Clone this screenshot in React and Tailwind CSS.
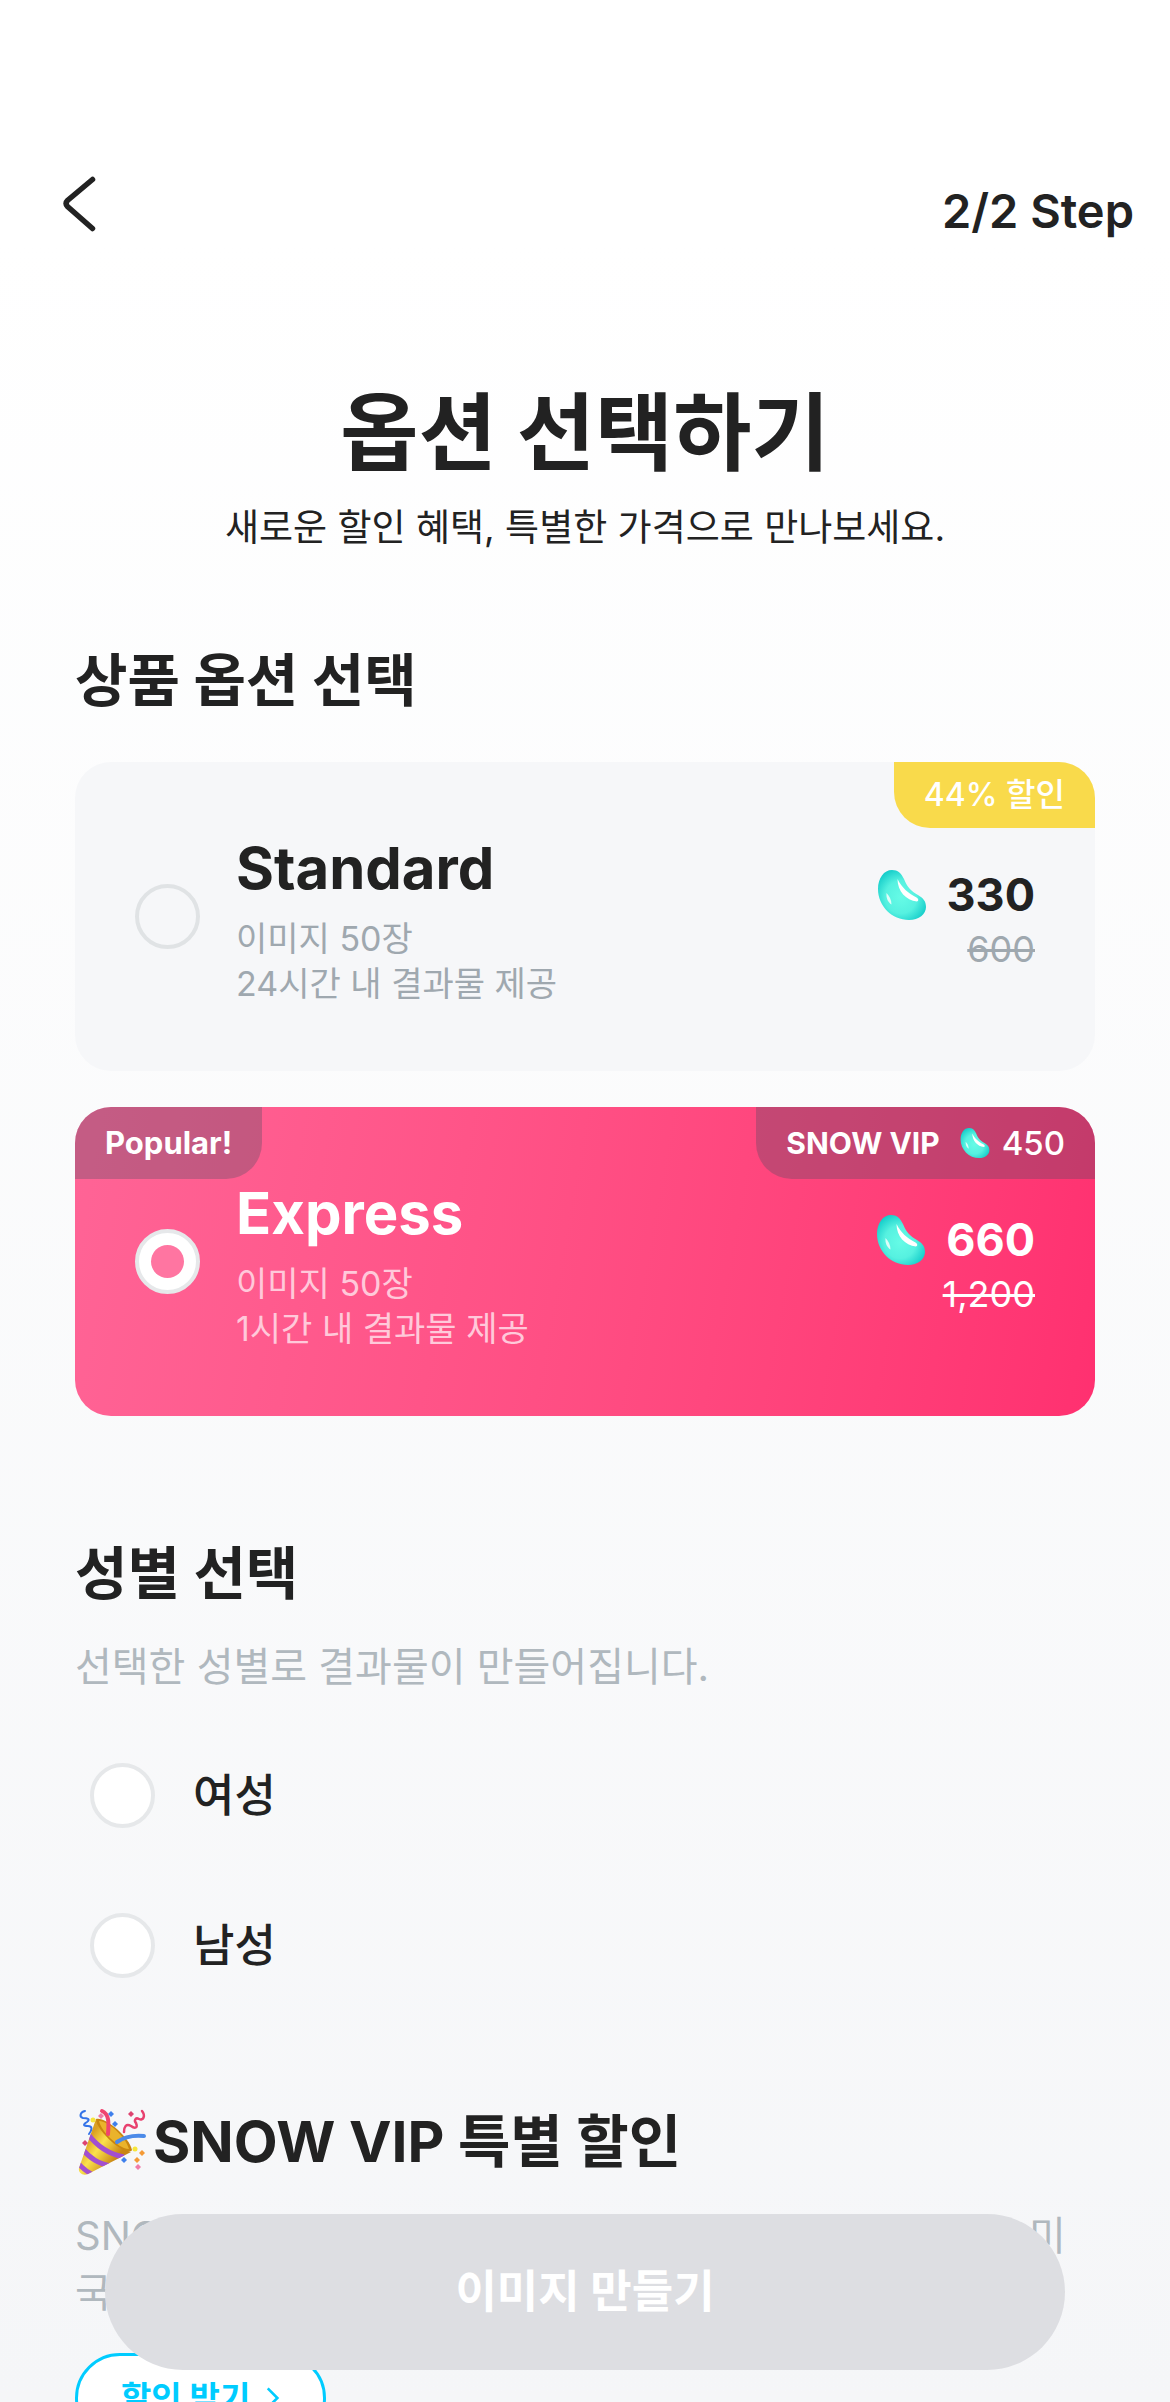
import { useState } from "react";

const productOptions = [
  {
    id: "standard",
    name: "Standard",
    details: ["이미지 50장", "24시간 내 결과물 제공"],
    price: "330",
    originalPrice: "600",
    discount: "44% 할인",
  },
  {
    id: "express",
    name: "Express",
    details: ["이미지 50장", "1시간 내 결과물 제공"],
    price: "660",
    originalPrice: "1,200",
    popular: true,
    vipPrice: "450",
  },
];

const genders = [
  { id: "female", label: "여성" },
  { id: "male", label: "남성" },
];

function BeanIcon({ id, className }) {
  return (
    <svg viewBox="0 0 50 52" className={className} aria-hidden="true">
      <defs>
        <radialGradient id={id} cx="0.48" cy="0.54" r="0.6">
          <stop offset="0" stopColor="#66fbe6" />
          <stop offset="0.55" stopColor="#56f1e0" />
          <stop offset="1" stopColor="#12cbc9" />
        </radialGradient>
        <filter id={`${id}-soft`} x="-20%" y="-20%" width="140%" height="140%">
          <feGaussianBlur stdDeviation="0.6" />
        </filter>
      </defs>
      <path
        d="M15 1C7 1 1 9 1 20C1 37 15 51 32 51C42 51 49 45 49 38C49 32 46 29 41 26C34 22 30 18 27 10C24 4 21 1 15 1Z"
        fill={`url(#${id})`}
      />
      <g fill="#fff" filter={`url(#${id}-soft)`}>
        <path d="M20.500 10C20.500 22 29 31.500 40 32.500C42 31.500 41.500 30 39.500 28.500C31 24 25 19 20.500 10Z" />
        <path d="M9.500 24C9 29 11 33.500 14.500 35.500C14.500 31 12.500 27 9.500 24Z" opacity="0.8" />
      </g>
    </svg>
  );
}

function PartyIcon({ className }) {
  return (
    <svg viewBox="5 3 78 78" className={className} aria-hidden="true">
      <defs>
        <linearGradient id="cone" x1="0.15" y1="0.4" x2="0.65" y2="0.8">
          <stop offset="0" stopColor="#dba022" />
          <stop offset="0.4" stopColor="#fbe24c" />
          <stop offset="1" stopColor="#c98512" />
        </linearGradient>
        <clipPath id="coneClip">
          <path d="M26 19L9 68C8 73 13 76 18 74L61 52C50 48 34 34 26 19Z" />
        </clipPath>
      </defs>
      <path d="M26 19L9 68C8 73 13 76 18 74L61 52C50 48 34 34 26 19Z" fill="url(#cone)" />
      <g clipPath="url(#coneClip)" fill="none" stroke="#a24fd0" strokeWidth="5">
        <path d="M18 34C26 45 38 54 54 57" />
        <path d="M12 49C20 58 28 64 42 66" />
        <path d="M7 62C12 68 18 73 26 76" />
      </g>
      <path d="M26 19C34 16 59 36 62 50C60 54 50 49 42 42C34 35 26 25 26 19Z" fill="#c9860f" />
      <path d="M29 21C36 20 56 36 59 49C52 49 46 43 40 38C35 33 30 26 29 21Z" fill="#eab32b" />

      {/* Streamers */}
      <g fill="none" strokeLinecap="round">
        <path d="M32 11C39 14 39 22 38 34" stroke="#f0436f" strokeWidth="4" />
        <path d="M47 42C54 37 63 35 74 36" stroke="#4b8ae8" strokeWidth="4" />
        <path d="M15 11C10 12 9 17 13 18C17 18 21 19 17 22C12 25 14 26 18 26C23 26 22 30 19 34" stroke="#3473e8" strokeWidth="2" />
        <path d="M72 11C76 16 73 21 69 19C65 17 64 21 66 23C68 28 65 29 61 26C56 23 54 27 54 32" stroke="#e8416f" strokeWidth="2.500" />
      </g>

      {/* Confetti */}
      <circle cx="23" cy="20" r="2.500" fill="#f6e63c" />
      <circle cx="65" cy="49" r="2.500" fill="#f6e63c" />
      <g fill="#3f80ec">
        <path d="M41 11L44 14L41 17L38 14Z" />
        <path d="M45 21L48 24L45 27L42 24Z" />
        <path d="M54 57L57 60L54 63L51 60Z" />
      </g>
      <g fill="#dd4470">
        <path d="M61 11L64 14L61 17L58 14Z" />
        <path d="M15 40L18 43L15 46L12 43Z" />
      </g>
      <g fill="#f07ba8">
        <path d="M31 13L34 16L31 19L28 16Z" />
        <path d="M68 64L71 67L68 70L65 67Z" />
      </g>
      <g fill="#f49a36">
        <path d="M72 50L75 53L72 56L69 53Z" />
        <path d="M67 57L70 60L67 63L64 60Z" />
      </g>
    </svg>
  );
}

function Radio({ className, ...props }) {
  return (
    <input
      type="radio"
      className={`grid size-[65px] shrink-0 appearance-none place-content-center rounded-full border-4 before:size-[33px] before:rounded-full checked:bg-white checked:before:bg-[#ff75a1] checked:before:content-[''] ${className}`}
      {...props}
    />
  );
}

function ProductCard({ option, selected, onSelect }) {
  return (
    <label
      className={`relative flex h-[309px] items-center overflow-hidden rounded-[36px] pr-15 pl-15 ${
        selected ? "bg-linear-100 from-[#ff6496] to-[#ff3070] text-white" : "bg-[#f6f7f9] text-[#222]"
      }`}
    >
      <Radio
        name="product"
        value={option.id}
        checked={selected}
        onChange={onSelect}
        className={selected ? "border-[#e6e8ea]" : "border-[#e0e3e5]"}
      />
      <div className="mt-1 ml-9 flex-1">
        <p className="text-[58px] leading-[72px] font-bold">{option.name}</p>
        <div className={`mt-3 text-[34px] leading-[45px] ${selected ? "text-[#ffc9da]" : "text-[#9fa8af]"}`}>
          {option.details.map((line) => (
            <p key={line}>{line}</p>
          ))}
        </div>
      </div>
      <div className="mt-1 flex flex-col items-end">
        <p className="flex items-center text-[45px] leading-[60px] font-bold">
          <BeanIcon id={`bean-${option.id}`} className="mr-5 h-[52px] w-[50px]" />
          {option.price}
        </p>
        <s className={`text-[36px] leading-[48px] ${selected ? "text-white" : "text-[#9fa8af]"}`}>
          {option.originalPrice}
        </s>
      </div>

      {/* Badges */}
      {option.discount && (
        <span className="absolute top-0 right-0 rounded-bl-[36px] bg-[#f9da4b] px-[30px] text-[32px] leading-[66px] font-medium text-white">
          {option.discount}
        </span>
      )}
      {option.popular && (
        <span className="absolute top-0 left-0 rounded-br-[36px] bg-[#3d4c5d]/30 px-[30px] text-[31px] leading-[72px] font-bold text-white">
          Popular!
        </span>
      )}
      {option.vipPrice && (
        <span className="absolute top-0 right-0 flex items-center rounded-bl-[36px] bg-[#3d4c5d]/30 px-[30px] text-[33px] leading-[72px] font-medium text-white">
          <span className="text-[30px] font-bold">SNOW VIP</span>
          <BeanIcon id="bean-vip" className="mr-3 ml-5 h-[32px] w-[30px]" />
          {option.vipPrice}
        </span>
      )}
    </label>
  );
}

export default function App() {
  const [product, setProduct] = useState("express");
  const [gender, setGender] = useState(null);

  return (
    <div className="h-screen overflow-hidden bg-linear-to-b from-white from-10% to-[#f5f6f8] font-[Inter,'Noto_Sans_CJK_KR',sans-serif] text-[#222]">
      {/* Header */}
      <header className="flex items-start justify-between pt-[165px] pr-9 pl-[60px]">
        <button type="button" aria-label="뒤로" className="pt-2">
          <svg viewBox="0 0 38 60" className="h-[60px] w-[38px]" fill="none" aria-hidden="true">
            <path
              d="M32.500 6.500L7.500 27.500Q4.500 30.500 7.500 33.500L32.500 55.500"
              stroke="#222"
              strokeWidth="5.500"
              strokeLinecap="round"
            />
          </svg>
        </button>
        <p className="text-[47px] leading-[92px] font-semibold">2/2 Step</p>
      </header>

      <main className="px-[75px] pt-[122px]">
        <h1 className="text-center text-[85px] leading-[110px] font-bold">옵션 선택하기</h1>
        <p className="mt-3 text-center text-[37px] leading-[54px]">새로운 할인 혜택, 특별한 가격으로 만나보세요.</p>

        {/* Product options */}
        <section className="mt-[90px]">
          <h2 className="text-[57px] leading-[72px] font-bold">상품 옵션 선택</h2>
          <div className="mt-[45px] flex flex-col gap-9">
            {productOptions.map((option) => (
              <ProductCard
                key={option.id}
                option={option}
                selected={product === option.id}
                onSelect={() => setProduct(option.id)}
              />
            ))}
          </div>
        </section>

        {/* Gender */}
        <section className="mt-[122px]">
          <h2 className="text-[57px] leading-[72px] font-bold">성별 선택</h2>
          <p className="mt-7 text-[40px] leading-[57px] text-[#b0b8be]">선택한 성별로 결과물이 만들어집니다.</p>
          <div className="mt-[68px] flex flex-col gap-[85px] pl-[15px]">
            {genders.map((item) => (
              <label key={item.id} className="flex items-center gap-[38px] text-[45px] leading-[65px] font-medium">
                <Radio
                  name="gender"
                  value={item.id}
                  checked={gender === item.id}
                  onChange={() => setGender(item.id)}
                  className="border-[#e6e8ea] bg-white"
                />
                {item.label}
              </label>
            ))}
          </div>
        </section>

        {/* VIP promotion */}
        <section className="mt-[125px]">
          <h2 className="flex items-center text-[57px] leading-[78px] font-bold">
            <PartyIcon className="size-[78px]" />
            SNOW VIP 특별 할인
          </h2>
          <p className="mt-[26px] text-[40px] leading-[57px] break-all text-[#b0b8be]">
            SNOW VIP를 구독하고, 특별한 할인 혜택을 받아보세요. 미국에서도 이용할 수 있어요.
          </p>
          <a
            href="#vip"
            className="mt-8 inline-flex items-center gap-4 rounded-full border-3 border-[#0cf] bg-white px-[43px] text-[33px] leading-[84px] font-bold text-[#0cf]"
          >
            할인 받기
            <svg viewBox="0 0 16 26" className="h-[26px] w-[14px]" fill="none" aria-hidden="true">
              <path d="M2 2L13 13L2 24" stroke="#0cf" strokeWidth="3" />
            </svg>
          </a>
        </section>
      </main>

      <div className="fixed inset-x-0 bottom-8 px-[105px]">
        <button
          type="button"
          disabled={!gender}
          className="w-full rounded-full bg-[#3bf] text-[45px] leading-[156px] font-bold text-white disabled:bg-[#dddee2]"
        >
          이미지 만들기
        </button>
      </div>
    </div>
  );
}
